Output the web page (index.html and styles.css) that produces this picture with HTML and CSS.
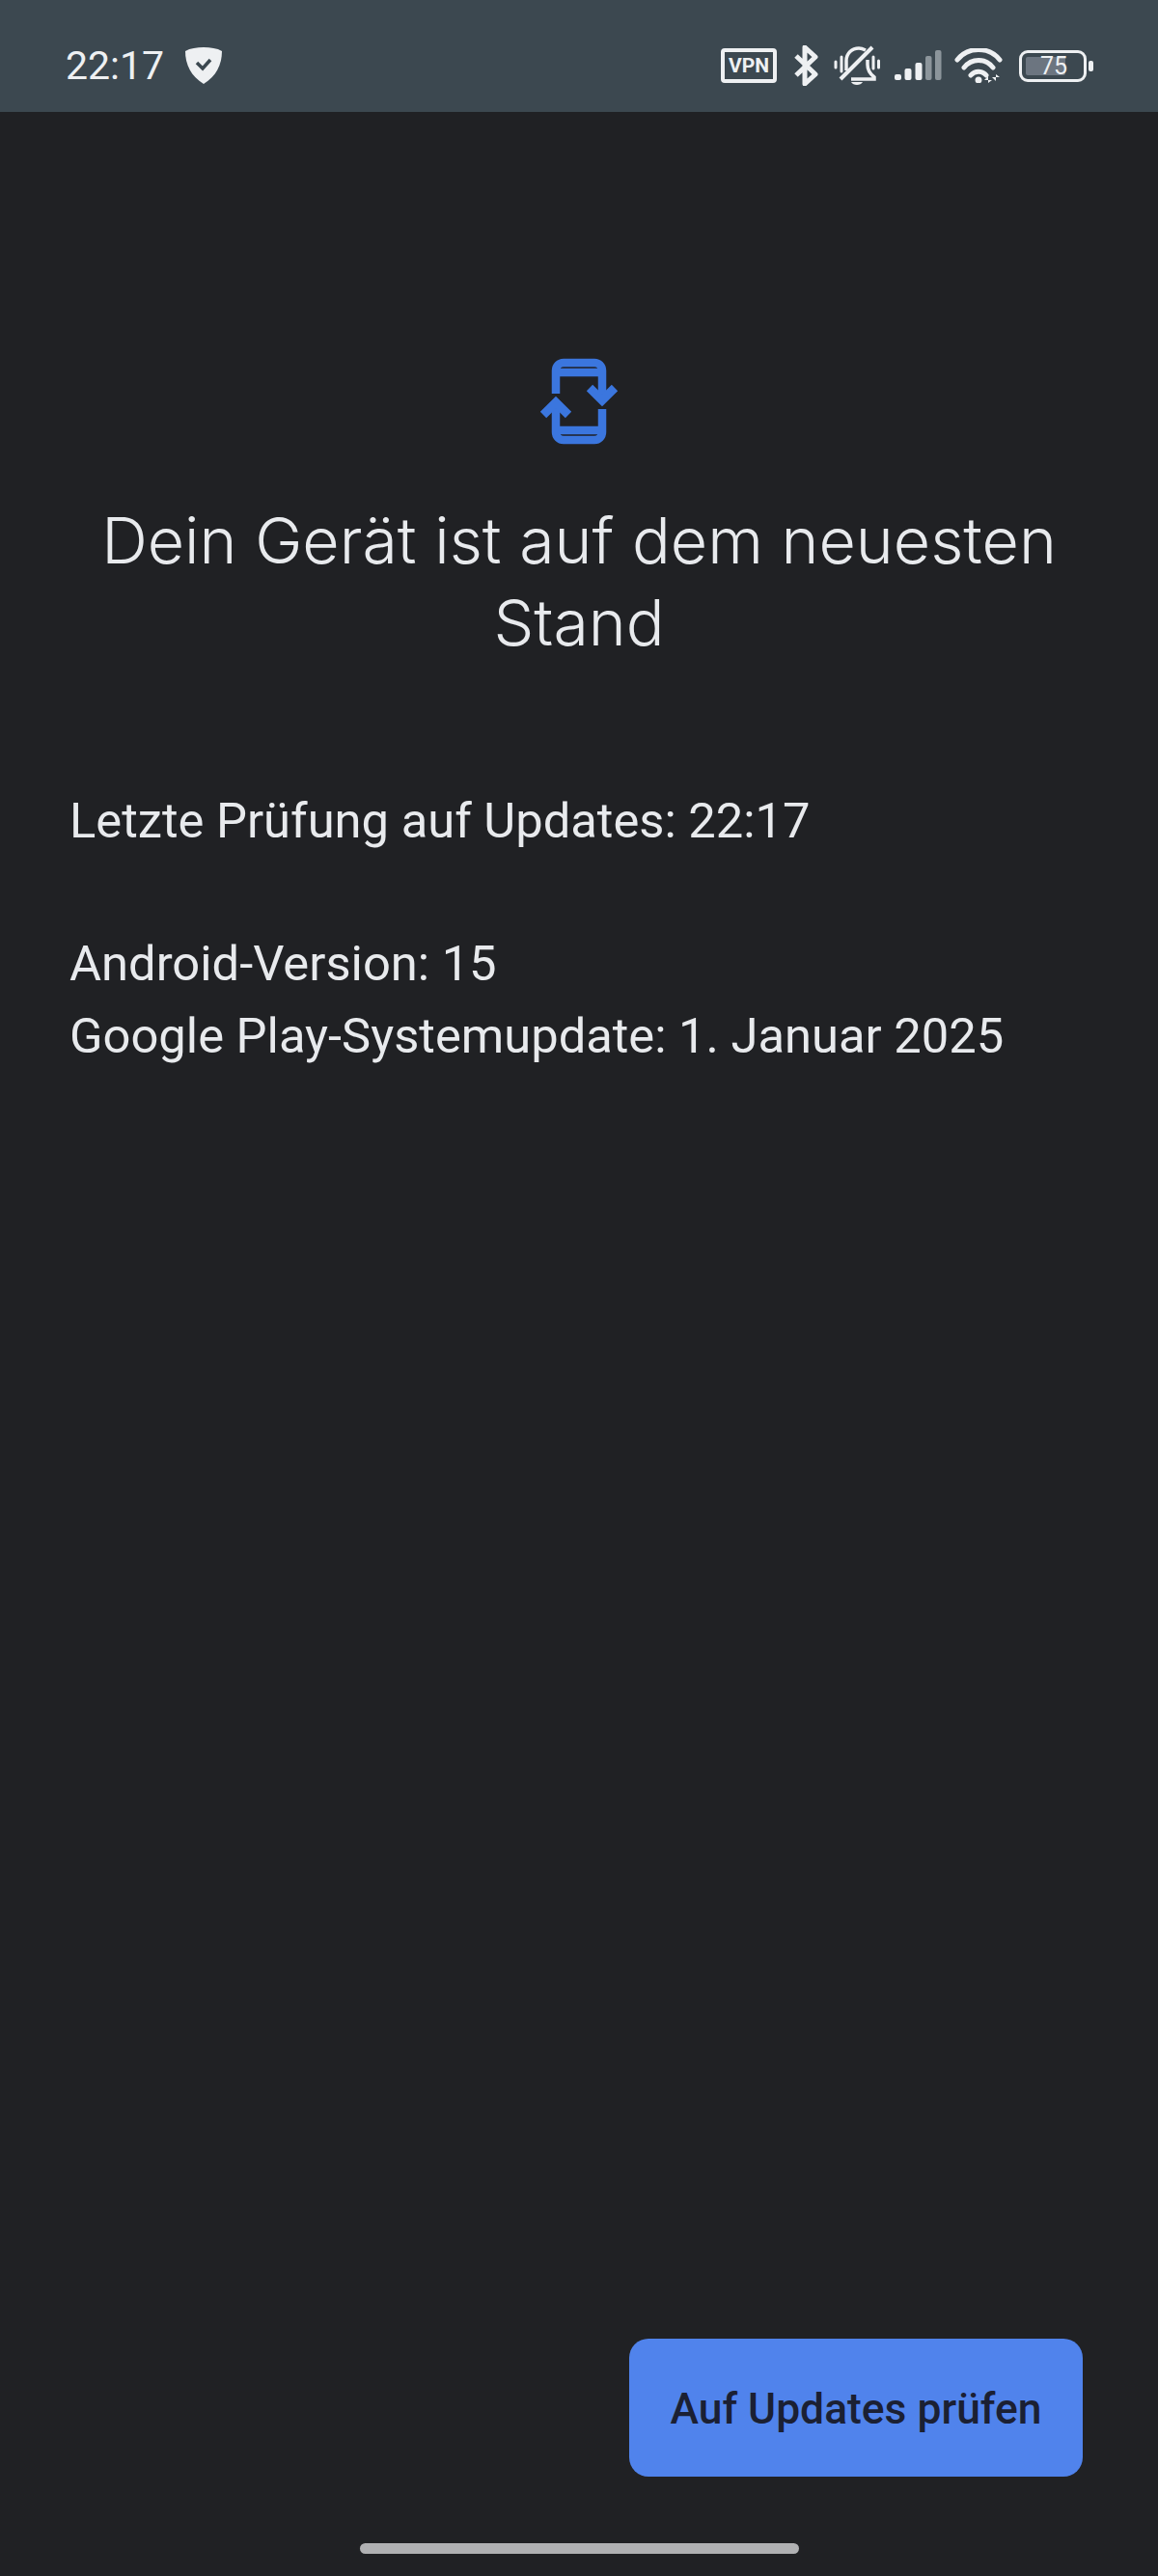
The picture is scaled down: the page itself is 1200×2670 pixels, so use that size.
FILE: index.html
```html
<!DOCTYPE html>
<html lang="de">
<head>
  <meta charset="UTF-8">
  <meta name="viewport" content="width=device-width, initial-scale=1.0">
  <title>Systemupdate</title>
  <link rel="stylesheet" href="styles.css">
</head>
<body>
  <!-- Status bar -->
  <div class="status-bar">
    <div class="status-left">
      <span class="clock">22:17</span>
      <svg class="shield" width="38" height="38" viewBox="0 0 38 38">
        <path d="M19 0C26 0 33 1 38 4C38 18 32 30 19 38C6 30 0 18 0 4C5 1 12 0 19 0Z" fill="#eef0f2"/>
        <path d="M12 16L18 22L26 13" fill="none" stroke="#3c4850" stroke-width="3.500"/>
      </svg>
    </div>
    <div class="status-right">
      <span class="vpn">VPN</span>
      <svg class="bluetooth" width="26" height="42" viewBox="0 0 26 42">
        <path d="M3 11L23 30L12 40V2L23 12L3 31" fill="none" stroke="#eef0f2" stroke-width="5" stroke-linejoin="round"/>
      </svg>
      <svg class="bell" width="48" height="42" viewBox="0 0 48 42">
        <path d="M13 26V16C13 8 19 3 26 3C29 3 31 4 33 5M35 15V20C35 26 38 30 42 33V35H18" fill="none" stroke="#eef0f2" stroke-width="3.500"/>
        <path d="M40 2L7 35" stroke="#eef0f2" stroke-width="4"/>
        <path d="M18 38H30C28 42 20 42 18 38Z" fill="#eef0f2"/>
        <path d="M2 17V23M8 12V27M41 12V24M46.500 16V23" stroke="#eef0f2" stroke-width="3" stroke-linecap="round"/>
      </svg>
      <svg class="signal" width="50" height="32" viewBox="0 0 50 32">
        <rect x="0" y="25" width="7" height="6" rx="2" fill="#eef0f2"/>
        <rect x="10.500" y="19" width="7" height="12" rx="2" fill="#eef0f2"/>
        <rect x="21.500" y="13" width="7" height="18" rx="2" fill="#eef0f2"/>
        <rect x="32" y="6" width="6.500" height="25" rx="2" fill="#8c959b"/>
        <rect x="42" y="0" width="6.500" height="31" rx="2" fill="#8c959b"/>
      </svg>
      <svg class="wifi" width="50" height="36" viewBox="0 0 50 36">
        <path d="M3 12C14 -2 36 -2 47 12M10 20C18 10 32 10 40 20M17 28C21 23 29 23 33 28" fill="none" stroke="#eef0f2" stroke-width="5" stroke-linecap="round"/>
        <circle cx="25" cy="33" r="3.500" fill="#eef0f2"/>
        <path d="M35 36V29L31 33H39ZM43 27V34L39 30H47Z" fill="#eef0f2"/>
      </svg>
      <div class="battery">
        <div class="battery-body"><div class="battery-level"></div><span class="battery-text">75</span></div>
        <div class="battery-cap"></div>
      </div>
    </div>
  </div>

  <div class="content">
    <svg class="update-icon" width="90" height="92" viewBox="0 0 90 92">
      <path d="M21 38V14A8 8 0 0 1 29 6H61A8 8 0 0 1 69 14V44M21 50V78A8 8 0 0 0 29 86H61A8 8 0 0 0 69 78V54M21 16H69M21 76H69" fill="none" stroke="#3b76de" stroke-width="8.500"/>
      <path d="M56 32L69 45L82 32M8 60L21 47L34 60" fill="none" stroke="#3b76de" stroke-width="9"/>
    </svg>
    <h1>Dein Gerät ist auf dem neuesten Stand</h1>
    <p class="last-check">Letzte Prüfung auf Updates: 22:17</p>
    <p class="info">Android-Version: 15<br>Google Play-Systemupdate: 1. Januar 2025</p>
  </div>

  <div class="actions">
    <button class="check-button">Auf Updates prüfen</button>
  </div>
  <div class="home-bar"></div>
</body>
</html>
```

FILE: styles.css
```css
html, body {
  margin: 0;
  padding: 0;
}
body {
  width: 1200px;
  height: 2670px;
  overflow: hidden;
  display: flex;
  flex-direction: column;
  background: #202124;
  color: #e8eaed;
  font-family: Roboto, sans-serif;
}
.status-bar {
  box-sizing: border-box;
  height: 116px;
  background: #3c4850;
  display: flex;
  justify-content: space-between;
  align-items: center;
  padding: 20px 67px 0 68px;
  color: #eef0f2;
}
.status-left, .status-right {
  display: flex;
  align-items: center;
}
.clock {
  font-size: 41px;
  line-height: 48px;
}
.shield {
  margin-left: 22px;
}
.vpn {
  box-sizing: border-box;
  width: 58px;
  height: 36px;
  border: 4px solid #eef0f2;
  border-radius: 4px;
  font-size: 21px;
  line-height: 28px;
  font-weight: 700;
  text-align: center;
}
.bluetooth {
  margin-left: 17px;
}
.bell {
  margin-left: 16px;
}
.signal {
  margin-left: 15px;
}
.wifi {
  margin-left: 12px;
}
.battery {
  display: flex;
  align-items: center;
  margin-left: 17px;
}
.battery-body {
  box-sizing: border-box;
  position: relative;
  width: 70px;
  height: 33px;
  border: 3px solid #eef0f2;
  border-radius: 9px;
  padding: 4px;
}
.battery-level {
  width: 73%;
  height: 100%;
  background: #6c7580;
  border-radius: 2px;
}
.battery-text {
  position: absolute;
  top: 0;
  right: 17px;
  font-size: 25px;
  line-height: 27px;
}
.battery-cap {
  width: 5px;
  height: 11px;
  margin-left: 2px;
  background: #eef0f2;
  border-radius: 2px;
}
.content {
  flex: 1;
  padding: 254px 72px 0;
}
.update-icon {
  display: block;
  margin: 0 auto;
}
h1 {
  margin: 56px -20px 0;
  font-family: Inter, sans-serif;
  font-size: 66.200px;
  line-height: 85px;
  font-weight: 300;
  text-align: center;
}
.last-check {
  margin: 125px 0 0;
  font-size: 50.700px;
  line-height: 75px;
}
.info {
  margin: 73px 0 0;
  font-size: 50.700px;
  line-height: 75px;
}
.actions {
  display: flex;
  justify-content: flex-end;
  padding-right: 78px;
}
.check-button {
  width: 470px;
  height: 143px;
  padding: 3px 0 0;
  border: none;
  border-radius: 20px;
  background: #5083ec;
  color: #1b2033;
  font-family: Roboto, sans-serif;
  font-size: 44.400px;
  font-weight: 500;
}
.home-bar {
  width: 455px;
  height: 11px;
  margin: 69px auto 23px;
  background: #b0b1b3;
  border-radius: 6px;
}
```
